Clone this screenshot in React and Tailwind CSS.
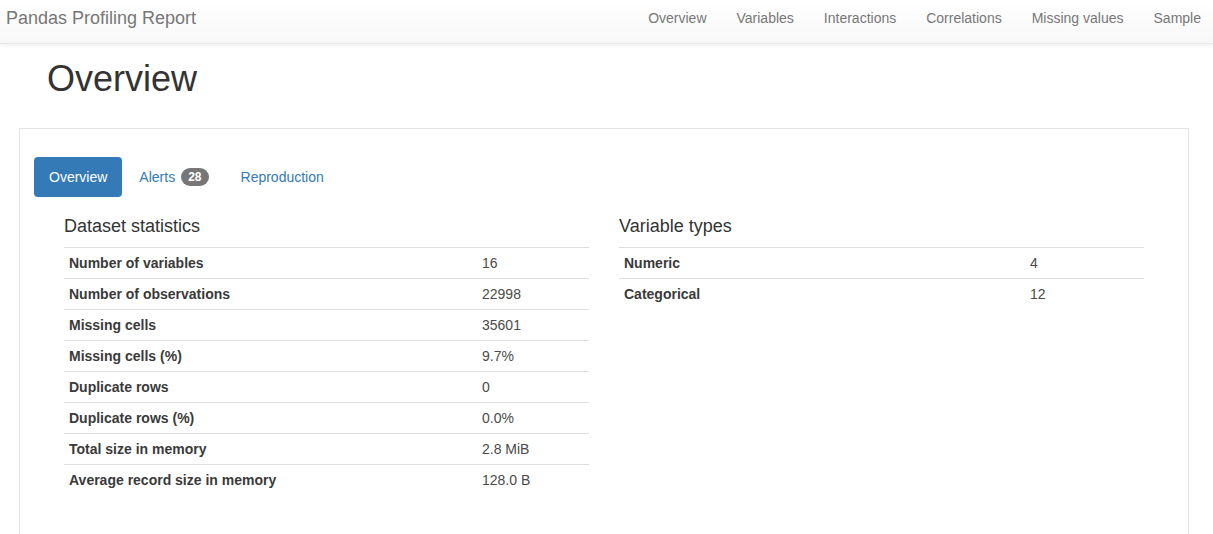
const navLinks = ['Overview', 'Variables', 'Interactions', 'Correlations', 'Missing values', 'Sample'];

const datasetStats = [
  ['Number of variables', '16'],
  ['Number of observations', '22998'],
  ['Missing cells', '35601'],
  ['Missing cells (%)', '9.7%'],
  ['Duplicate rows', '0'],
  ['Duplicate rows (%)', '0.0%'],
  ['Total size in memory', '2.8 MiB'],
  ['Average record size in memory', '128.0 B'],
];

const variableTypes = [
  ['Numeric', '4'],
  ['Categorical', '12'],
];

function StatTable({ title, rows, labelWidth }) {
  return (
    <div className="w-[525px]">
      <h4 className="mt-[19px] mb-[11px] h-5 text-[18px] leading-5 text-[#333]">{title}</h4>
      <table className="w-full border-collapse text-[14px] leading-5 text-[#333]">
        <tbody>
          {rows.map(([label, value]) => (
            <tr key={label} className="border-t border-[#ddd]">
              <th className="p-[5px] text-left font-bold text-[#3a3a3a]" style={{ width: labelWidth }}>{label}</th>
              <td className="p-[5px] text-[#4a4a4a]">{value}</td>
            </tr>
          ))}
        </tbody>
      </table>
    </div>
  );
}

export default function App() {
  return (
    <div className="min-h-screen bg-white font-['Liberation_Sans',Arial,sans-serif]">
      {/* NAVBAR */}
      <nav className="h-[44px] border-b border-[#e7e7e7] bg-gradient-to-b from-white to-[#f8f8f8] shadow-[0_1px_5px_rgba(0,0,0,0.075)]">
        <div className="flex h-[36px] items-center justify-between pl-[6px] pr-[12px]">
          <span className="text-[18px] leading-5 text-[#777]">Pandas Profiling Report</span>
          <ul className="flex gap-[30px] text-[14px] leading-5 text-[#777]">
            {navLinks.map((l) => (
              <li key={l}>{l}</li>
            ))}
          </ul>
        </div>
      </nav>

      {/* TITOLO */}
      <h1 className="mt-[15px] mb-[29px] h-[40px] pl-[47px] text-[36px] leading-[40px] text-[#333]">Overview</h1>

      {/* BOX */}
      <div className="ml-[19px] w-[1170px] border border-[#e3e3e3] px-[14px] pt-[28px] pb-[60px]">
        <ul className="flex gap-[2px] text-[14px] leading-5">
          <li className="rounded-[4px] bg-[#337ab7] px-[15px] py-[10px] text-white">Overview</li>
          <li className="flex items-center px-[15px] py-[10px] text-[#337ab7]">
            Alerts
            <span className="ml-[6px] rounded-[10px] bg-[#777] px-[7px] py-[3px] text-[12px] leading-3 font-bold text-white">28</span>
          </li>
          <li className="px-[15px] py-[10px] text-[#337ab7]">Reproduction</li>
        </ul>

        <div className="flex gap-[30px] pl-[30px]">
          <StatTable title="Dataset statistics" rows={datasetStats} labelWidth="413px" />
          <StatTable title="Variable types" rows={variableTypes} labelWidth="406px" />
        </div>
      </div>
    </div>
  );
}
